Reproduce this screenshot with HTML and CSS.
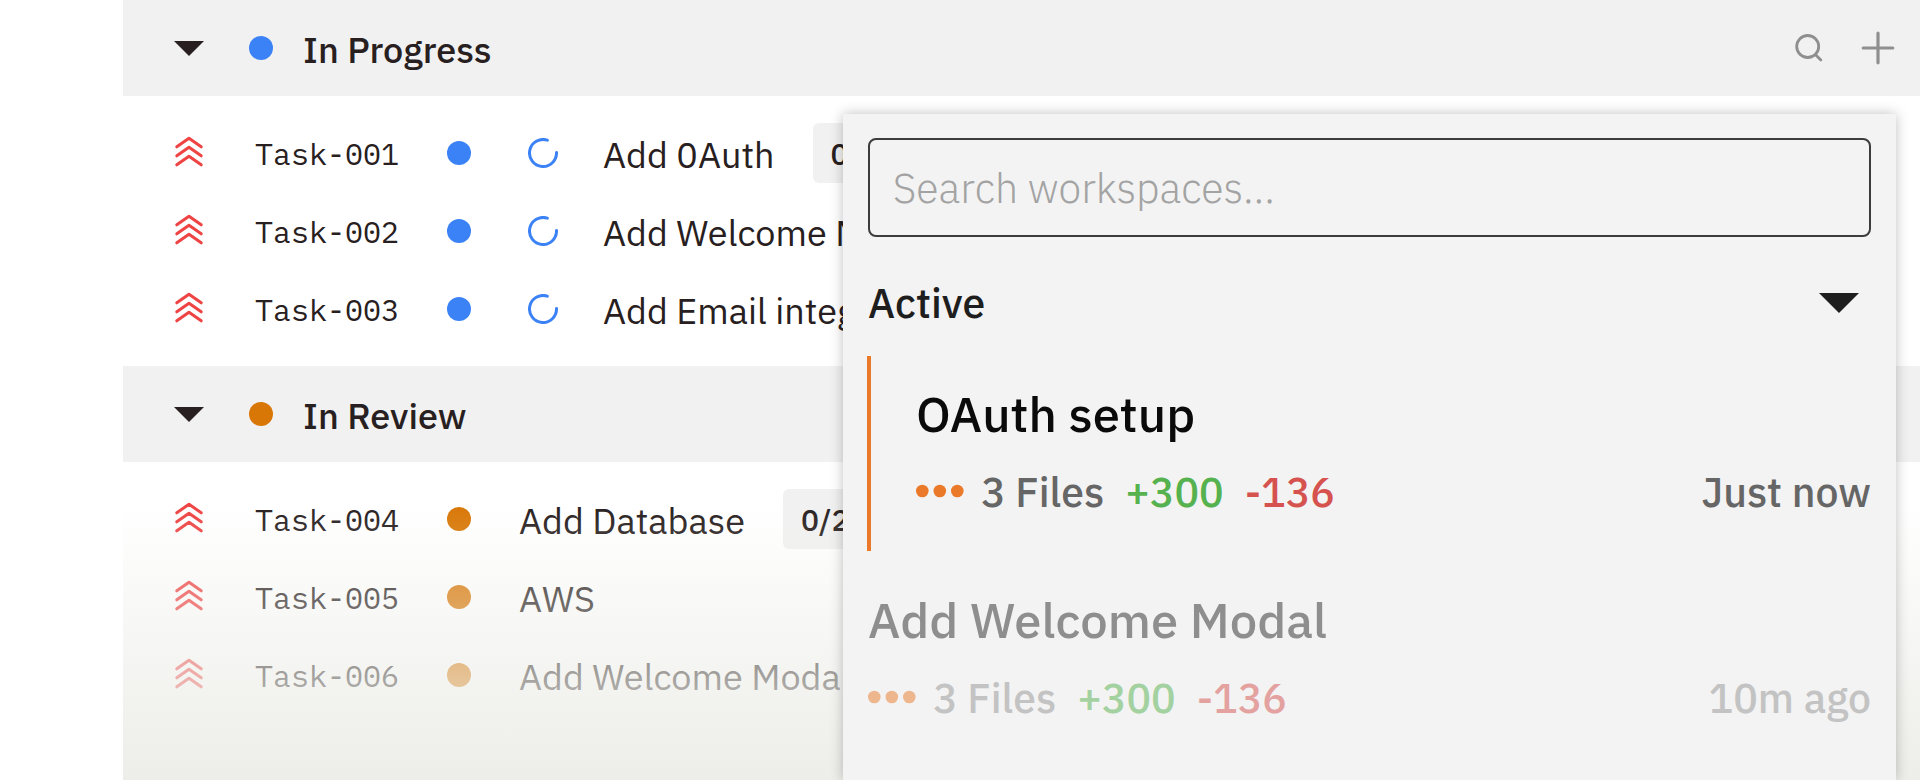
FILE: index.html
```
<!DOCTYPE html>
<html lang="en">
<head>
  <meta charset="UTF-8">
  <meta name="viewport" content="width=device-width, initial-scale=1.0">
  <title>Tasks</title>
  <link rel="stylesheet" href="styles.css">
</head>
<body>

  <!-- Shared icons -->
  <svg class="sprite" aria-hidden="true">
    <symbol id="caret" viewBox="0 0 30 15">
      <path d="M0 0h30L15 15z" fill="currentColor"/>
    </symbol>
    <symbol id="priority" viewBox="0 0 30 34">
      <path d="M2.8 10.8 15 2.2l12.2 8.6M2.8 19.8 15 11.2l12.2 8.6M2.8 28.8 15 20.2l12.2 8.6" fill="none" stroke="currentColor" stroke-width="3" stroke-linecap="round" stroke-linejoin="round"/>
    </symbol>
    <symbol id="spinner" viewBox="0 0 30 30">
      <path d="M19.3 2.2A13.5 13.5 0 1 0 28.5 14.4" fill="none" stroke="currentColor" stroke-width="3" stroke-linecap="round"/>
    </symbol>
    <symbol id="dots" viewBox="0 0 48 14">
      <g fill="currentColor">
        <circle cx="6.3" cy="7" r="6.3"/>
        <circle cx="23.8" cy="7" r="6.3"/>
        <circle cx="41.3" cy="7" r="6.3"/>
      </g>
    </symbol>
  </svg>

  <main class="board">
    <section class="group">
      <header class="group-header">
        <button class="toggle" type="button" aria-label="Collapse In Progress"><svg class="caret"><use href="#caret"/></svg></button>
        <span class="dot blue"></span>
        <h2>In Progress</h2>
        <div class="actions">
          <button type="button" aria-label="Search">
            <svg width="34" height="34" viewBox="0 0 34 34" fill="none" stroke="currentColor" stroke-width="2.8" stroke-linecap="round">
              <circle cx="15.7" cy="15.5" r="11"/>
              <path d="M23.8 24l5 5"/>
            </svg>
          </button>
          <button type="button" aria-label="Add task">
            <svg width="34" height="34" viewBox="0 0 34 34" fill="none" stroke="currentColor" stroke-width="3.2" stroke-linecap="round">
              <path d="M17 2.2v29.6M2.2 17h29.6"/>
            </svg>
          </button>
        </div>
      </header>
      <ul class="tasks">
        <li class="task">
          <svg class="priority"><use href="#priority"/></svg>
          <span class="task-id">Task-001</span>
          <span class="dot blue"></span>
          <svg class="spinner"><use href="#spinner"/></svg>
          <span class="task-name">Add 0Auth</span>
          <span class="badge">0/3</span>
        </li>
        <li class="task">
          <svg class="priority"><use href="#priority"/></svg>
          <span class="task-id">Task-002</span>
          <span class="dot blue"></span>
          <svg class="spinner"><use href="#spinner"/></svg>
          <span class="task-name">Add Welcome Modal</span>
        </li>
        <li class="task">
          <svg class="priority"><use href="#priority"/></svg>
          <span class="task-id">Task-003</span>
          <span class="dot blue"></span>
          <svg class="spinner"><use href="#spinner"/></svg>
          <span class="task-name">Add Email integration</span>
        </li>
      </ul>
    </section>

    <section class="group">
      <header class="group-header">
        <button class="toggle" type="button" aria-label="Collapse In Review"><svg class="caret"><use href="#caret"/></svg></button>
        <span class="dot amber"></span>
        <h2>In Review</h2>
      </header>
      <ul class="tasks">
        <li class="task">
          <svg class="priority"><use href="#priority"/></svg>
          <span class="task-id">Task-004</span>
          <span class="dot amber"></span>
          <span class="task-name">Add Database</span>
          <span class="badge">0/2</span>
        </li>
        <li class="task">
          <svg class="priority"><use href="#priority"/></svg>
          <span class="task-id">Task-005</span>
          <span class="dot amber"></span>
          <span class="task-name">AWS</span>
        </li>
        <li class="task">
          <svg class="priority"><use href="#priority"/></svg>
          <span class="task-id">Task-006</span>
          <span class="dot amber"></span>
          <span class="task-name">Add Welcome Modal</span>
        </li>
      </ul>
    </section>

    <div class="fade"></div>

    <aside class="panel">
      <input class="search" type="text" placeholder="Search workspaces..." aria-label="Search workspaces">
      <div class="panel-header">
        <h3>Active</h3>
        <button class="toggle" type="button" aria-label="Collapse Active"><svg class="caret large"><use href="#caret"/></svg></button>
      </div>
      <article class="workspace active">
        <h4>OAuth setup</h4>
        <div class="meta">
          <svg class="dots"><use href="#dots"/></svg>
          <span>3 Files</span>
          <span class="added">+300</span>
          <span class="removed">-136</span>
          <time>Just now</time>
        </div>
      </article>
      <article class="workspace idle">
        <h4>Add Welcome Modal</h4>
        <div class="meta">
          <svg class="dots"><use href="#dots"/></svg>
          <span>3 Files</span>
          <span class="added">+300</span>
          <span class="removed">-136</span>
          <time>10m ago</time>
        </div>
      </article>
    </aside>
  </main>

</body>
</html>
```

FILE: styles.css
```
* {
  margin: 0;
  padding: 0;
  box-sizing: border-box;
}

body {
  background: #fff;
  color: #282020;
  font-family: "IBM Plex Sans", Roboto, sans-serif;
  font-size: 36px;
  line-height: 48px;
  overflow: hidden;
}

button {
  display: flex;
  background: none;
  border: 0;
  color: inherit;
  cursor: pointer;
}

h2, h3, h4 {
  font-weight: 500;
}

h2 {
  padding-top: 3px;
  font-size: 36px;
}

.sprite {
  display: none;
}

.board {
  position: relative;
  height: 100vh;
  margin-left: 123px;
  overflow: hidden;
  white-space: nowrap;
}

/* Groups */
.group-header {
  display: flex;
  align-items: center;
  height: 96px;
  padding: 0 25px 0 51px;
  background: #f1f1f1;
}

.group-header .dot {
  margin: 0 30px 0 45px;
}

.caret {
  width: 30px;
  height: 15px;
}

.caret.large {
  width: 40px;
  height: 20px;
}

.dot {
  flex: none;
  width: 24px;
  height: 24px;
  border-radius: 50%;
}

.blue {
  background: #3b82f6;
}

.amber {
  background: #d97706;
}

.actions {
  display: flex;
  gap: 35px;
  margin-left: auto;
  color: #8f8f8f;
}

/* Task rows */
.tasks {
  padding: 18px 51px;
  list-style: none;
}

.task {
  display: flex;
  align-items: center;
  height: 78px;
}

.priority {
  width: 30px;
  height: 34px;
  color: #ef4444;
}

.task-id {
  margin: 0 48px 0 51px;
  padding-top: 2px;
  font-family: "IBM Plex Mono", "Liberation Mono", monospace;
  font-size: 30px;
}

.spinner {
  width: 30px;
  height: 30px;
  margin-left: 57px;
  color: #3b82f6;
}

.task-name {
  margin-left: 48px;
  padding-top: 3px;
}

.spinner + .task-name {
  margin-left: 45px;
}

.badge {
  height: 60px;
  margin-left: 38px;
  padding: 0 18px;
  border-radius: 6px;
  background: #f1f1f1;
  font-size: 30px;
  font-weight: 500;
  line-height: 62px;
}

.fade {
  position: absolute;
  right: 0;
  bottom: 0;
  left: 0;
  height: 276px;
  background: linear-gradient(rgba(237, 238, 233, 0), #edeee9);
  pointer-events: none;
}

/* Workspace popover */
.panel {
  position: absolute;
  top: 114px;
  right: 24px;
  bottom: 0;
  width: 1053px;
  max-width: calc(100% - 48px);
  padding: 24px 25px;
  background: #f3f3f3;
  box-shadow: 0 0 12px rgba(0, 0, 0, 0.25);
}

.search {
  display: block;
  width: 100%;
  height: 99px;
  padding: 0 23px;
  border: 2px solid #3c3c3c;
  border-radius: 8px;
  background: transparent;
  color: #1e1e1e;
  font-family: inherit;
  font-size: 41px;
  font-weight: 300;
}

.search::placeholder {
  color: #a3a3a3;
}

.panel-header {
  display: flex;
  align-items: center;
  justify-content: space-between;
  margin-top: 42px;
  padding-right: 12px;
  color: #1e1e1e;
}

.panel-header h3 {
  font-size: 41px;
}

.workspace {
  height: 195px;
  padding-top: 26px;
}

.workspace h4 {
  font-size: 49px;
  line-height: 64px;
}

.active {
  margin: 29px 0 11px -1px;
  padding-left: 45px;
  border-left: 4px solid #ea7a2a;
  color: #0a0a0a;
}

.idle {
  color: #8e8e8e;
}

.meta {
  display: flex;
  align-items: center;
  margin-top: 22px;
  color: #666;
  font-size: 41px;
  font-weight: 500;
}

.meta span {
  margin-right: 21px;
}

.meta time {
  margin-left: auto;
}

.meta .dots {
  width: 48px;
  height: 14px;
  margin: 0 17px 2px 0;
  color: #ea7a2a;
}

.added {
  color: #56b14f;
}

.removed {
  color: #d5524f;
}

.idle .meta > * {
  opacity: 0.5;
}

.idle .meta {
  color: #949494;
}
```
